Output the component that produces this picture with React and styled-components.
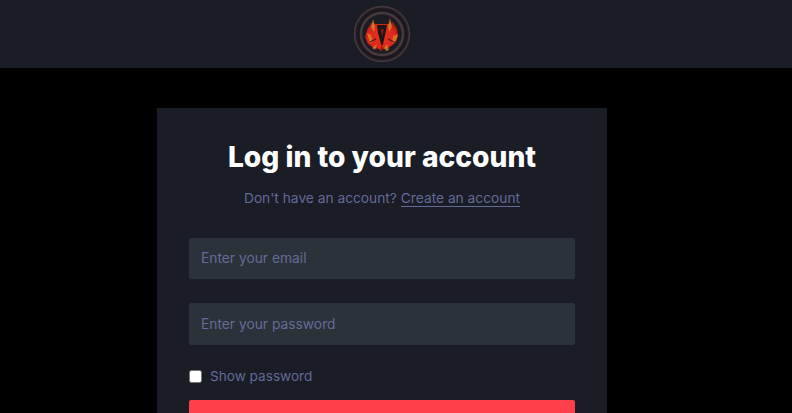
import React from 'react';
import styled, { createGlobalStyle } from 'styled-components';

const Global = createGlobalStyle`
  html, body { margin: 0; padding: 0; background: #000; overflow: hidden; }
  * { box-sizing: border-box; }
`;

const Page = styled.div`
  height: 413px;
  overflow: hidden;
  font-family: 'Inter', 'Roboto', sans-serif;
`;

const Header = styled.header`
  height: 68px;
  padding-right: 28px;
  background: #1a1c26;
  display: flex;
  justify-content: center;
  align-items: center;
`;

const Main = styled.main`
  padding-right: 28px;
`;

const Card = styled.section`
  width: 450px;
  margin: 40px auto 0;
  padding: 32px 32px 40px;
  background: #1a1c26;
`;

const Title = styled.h1`
  margin: 0;
  height: 34px;
  font-family: 'Inter', sans-serif;
  font-size: 28.2px;
  line-height: 34px;
  font-weight: 800;
  color: #fff;
  text-align: center;
`;

const Sub = styled.p`
  margin: 14px 0 0;
  height: 20px;
  font-size: 13.75px;
  line-height: 20px;
  color: #636b97;
  text-align: center;
`;

const SubLink = styled.a`
  color: #636b97;
  text-decoration: none;
  border-bottom: 1px solid #636b97;
`;

const Form = styled.form`
  margin-top: 30px;
  display: flex;
  flex-direction: column;
`;

const Field = styled.input`
  display: block;
  width: 100%;
  height: ${p => p.$h}px;
  margin-bottom: ${p => p.$gap}px;
  padding: 0 12px 1px;
  border: 0;
  border-radius: 2px;
  background: #2c3239;
  color: #fff;
  font-family: inherit;
  font-size: 13.8px;
  &::placeholder { color: #636b97; opacity: 1; }
`;

const CheckRow = styled.label`
  display: flex;
  align-items: center;
  gap: 8px;
  height: 20px;
  font-size: 13.6px;
  color: #636b97;
`;

const Check = styled.input`
  appearance: none;
  width: 13px;
  height: 13px;
  margin: 0;
  background: #fff;
  border: 1px solid #767676;
  border-radius: 2.5px;
`;

const Submit = styled.button`
  display: block;
  width: 100%;
  height: 44px;
  margin-top: 14px;
  border: 0;
  border-radius: 2px;
  background: #ff3f4a;
`;

const Logo = () => (
  <svg width="60" height="60" viewBox="0 0 60 60">
    <defs>
      <radialGradient id="fire" cx="50%" cy="50%" r="55%">
        <stop offset="0%" stopColor="#e8341a" />
        <stop offset="75%" stopColor="#dc261a" />
        <stop offset="100%" stopColor="#9a1e16" />
      </radialGradient>
      <filter id="soft">
        <feGaussianBlur stdDeviation="0.7" />
      </filter>
    </defs>
    <g filter="url(#soft)">
      <circle cx="30" cy="30" r="28.5" fill="#241f26" />
      <circle cx="30" cy="30" r="27.4" fill="none" stroke="#40353a" strokeWidth="1.8" />
      <circle cx="30" cy="30" r="24" fill="none" stroke="#1c191f" strokeWidth="2" />
      <circle cx="30" cy="30" r="21" fill="none" stroke="#453a3e" strokeWidth="2.4" />
      <circle cx="30" cy="30" r="19" fill="#1d1a20" />
      <path d="M15 26l4-7 5 1h12l5-2 4 7 1 8-4 7-6 4-5 1-2 2-2-2-5-1-6-4-3-7z" fill="url(#fire)" />
      <path d="M21 15l2 7-1 6-3-5zM38 14l-2 8 1 6 3-5zM15 29l4 2 2 7-3 1zM46 30l-5 2-1 7 4-2zM35 40l2 6-3 1-2-3zM25 40l-2 6-3-2z" fill="#d98a2e" opacity="0.75" />
      <path d="M18 38l6-3M42 38l-6-3M30 48v-5" stroke="#5a1614" strokeWidth="1.2" />
      <path d="M25 21h10l-1.5 8-2.5 11-1 2-1-2-3-11z" fill="#1e1214" />
      <path d="M28.3 25h3.6l-1.8 8z" fill="#7d1a17" />
    </g>
  </svg>
);

export default function App() {
  return (
    <Page>
      <Global />
      <Header>
        <Logo />
      </Header>
      <Main>
        <Card>
          <Title>Log in to your account</Title>
          <Sub>
            Don't have an account? <SubLink href="#">Create an account</SubLink>
          </Sub>
          <Form>
            <Field type="email" placeholder="Enter your email" $h={41} $gap={24} />
            <Field type="password" placeholder="Enter your password" $h={42} $gap={21} />
            <CheckRow>
              <Check type="checkbox" />
              Show password
            </CheckRow>
            <Submit type="button" />
          </Form>
        </Card>
      </Main>
    </Page>
  );
}
